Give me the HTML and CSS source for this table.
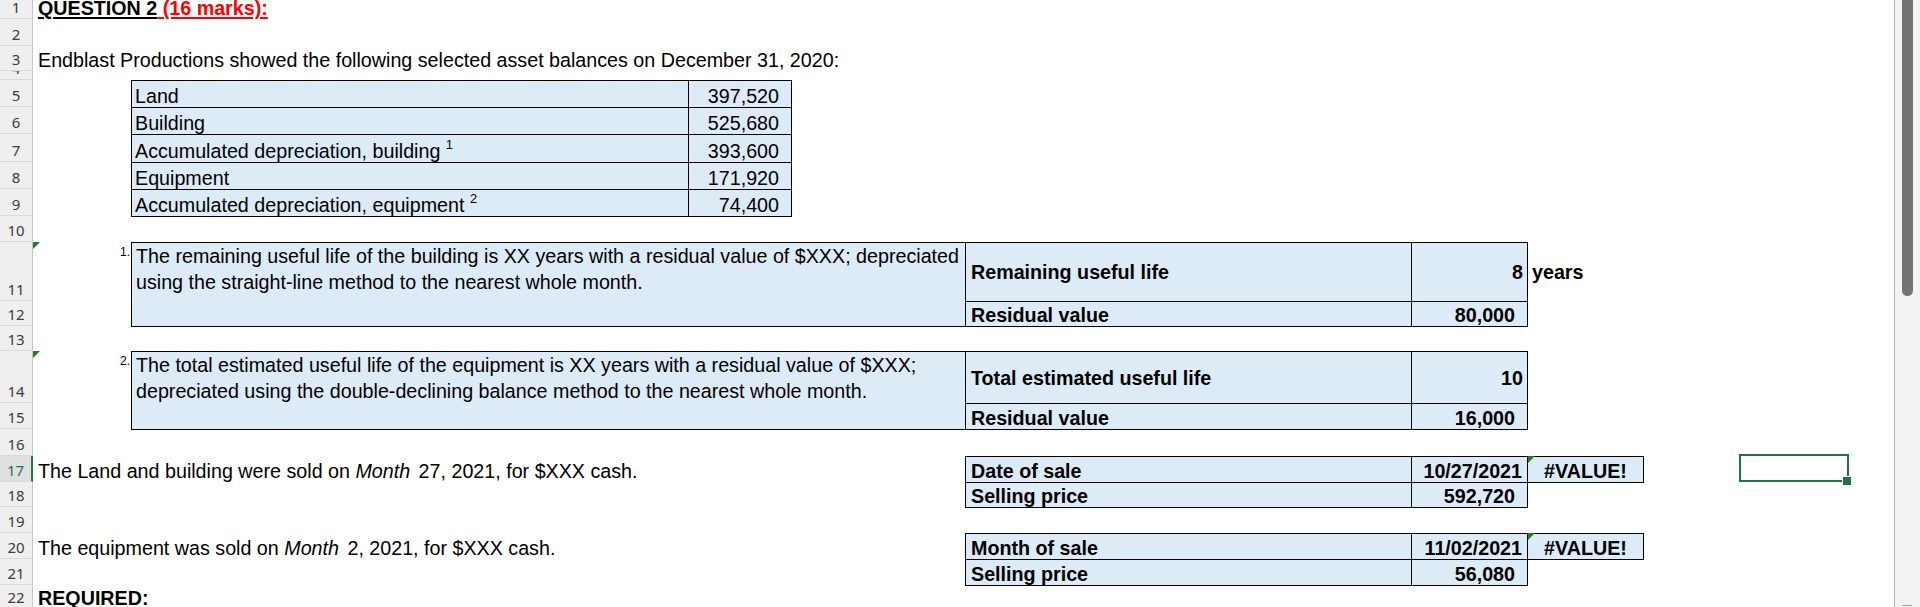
FILE: index.html
```html
<!DOCTYPE html>
<html lang="en">
<head>
<meta charset="utf-8">
<title>Question 2</title>
<link rel="stylesheet" href="styles.css">
</head>
<body>
<div class="app">
  <div class="sheet">
    <div class="rh">1</div>
    <div class="rh">2</div>
    <div class="rh">3</div>
    <div class="rh">4</div>
    <div class="rh">5</div>
    <div class="rh">6</div>
    <div class="rh">7</div>
    <div class="rh">8</div>
    <div class="rh">9</div>
    <div class="rh">10</div>
    <div class="rh">11</div>
    <div class="rh">12</div>
    <div class="rh">13</div>
    <div class="rh">14</div>
    <div class="rh">15</div>
    <div class="rh">16</div>
    <div class="rh on">17</div>
    <div class="rh">18</div>
    <div class="rh">19</div>
    <div class="rh">20</div>
    <div class="rh">21</div>
    <div class="rh">22</div>

    <div class="r1 wide b title"><span class="u-black">QUESTION 2</span><span class="u-red"> (16 marks):</span></div>
    <div class="cell r3 wide"><span>Endblast Productions showed the following selected asset balances on December 31, 2020:</span></div>

    <div class="cell bx r5 cb"><span>Land</span></div>
    <div class="cell bx num r5 cc"><span>397,520</span></div>
    <div class="cell bx r6 cb"><span>Building</span></div>
    <div class="cell bx num r6 cc"><span>525,680</span></div>
    <div class="cell bx r7 cb"><span>Accumulated depreciation, building <sup class="sup">1</sup></span></div>
    <div class="cell bx num r7 cc"><span>393,600</span></div>
    <div class="cell bx r8 cb"><span>Equipment</span></div>
    <div class="cell bx num r8 cc"><span>171,920</span></div>
    <div class="cell bx r9 cb"><span>Accumulated depreciation, equipment <sup class="sup">2</sup></span></div>
    <div class="cell bx num r9 cc"><span>74,400</span></div>

    <div class="tri r11 ca"></div>
    <div class="note r11 ca">1.</div>
    <div class="box bx rows11 span-bd">The remaining useful life of the building is XX years with a residual value of $XXX; depreciated<br>using the straight-line method to the nearest whole month.</div>
    <div class="cell bx b mid r11 ce"><span>Remaining useful life</span></div>
    <div class="cell bx b mid num tight r11 cf"><span>8</span></div>
    <div class="cell b mid unit r11 cg"><span>years</span></div>
    <div class="cell bx b r12 ce"><span>Residual value</span></div>
    <div class="cell bx b num r12 cf"><span>80,000</span></div>

    <div class="tri r14 ca"></div>
    <div class="note r14 ca">2.</div>
    <div class="box bx rows14 span-bd">The total estimated useful life of the equipment is XX years with a residual value of $XXX;<br>depreciated using the double-declining balance method to the nearest whole month.</div>
    <div class="cell bx b mid r14 ce"><span>Total estimated useful life</span></div>
    <div class="cell bx b mid num tight r14 cf"><span>10</span></div>
    <div class="cell bx b r15 ce"><span>Residual value</span></div>
    <div class="cell bx b num r15 cf"><span>16,000</span></div>

    <div class="cell r17 span-ad"><span>The Land and building were sold on <i class="it">Month</i> 27, 2021, for $XXX cash.</span></div>
    <div class="cell bx b r17 ce"><span>Date of sale</span></div>
    <div class="cell bx b num date r17 cf"><span>10/27/2021</span></div>
    <div class="cell bx b center r17 cg"><span>#VALUE!</span></div>
    <div class="tri tri-in r17 cg"></div>
    <div class="sel r17 ci"></div>
    <div class="cell bx b r18 ce"><span>Selling price</span></div>
    <div class="cell bx b num r18 cf"><span>592,720</span></div>

    <div class="cell r20 span-ad"><span>The equipment was sold on <i class="it">Month</i> 2, 2021, for $XXX cash.</span></div>
    <div class="cell bx b r20 ce"><span>Month of sale</span></div>
    <div class="cell bx b num date r20 cf"><span>11/02/2021</span></div>
    <div class="cell bx b center r20 cg"><span>#VALUE!</span></div>
    <div class="tri tri-in r20 cg"></div>
    <div class="cell bx b r21 ce"><span>Selling price</span></div>
    <div class="cell bx b num r21 cf"><span>56,080</span></div>

    <div class="cell r22 span-ad b"><span>REQUIRED:</span></div>
  </div>
  <div class="vscroll">
    <div class="thumb"></div>
    <div class="arrow"></div>
  </div>
</div>
</body>
</html>
```
FILE: styles.css
```css
* { box-sizing: border-box; }
html, body { margin: 0; padding: 0; }
body {
  background: #fff;
  overflow: hidden;
  font-family: "Liberation Sans", Arial, sans-serif;
  font-size: 19.7px;
  color: #000;
}
.app {
  display: flex;
  width: 1920px;
  height: 607px;
  overflow: hidden;
}
.sheet {
  flex: none;
  width: 1894px;
  height: 607px;
  overflow: hidden;
  display: grid;
  grid-template-columns: 33px 98px 557px 103px 174px 446px 116px 116px 96px 110px 45px;
  grid-template-rows: 19px 27px 25px 9px 27px 27px 28px 27px 27px 26px 59px 25px 25px 52px 26px 27px 26px 25px 26px 26px 26px 24px;
  align-content: start;
}

/* row headers */
.rh {
  grid-column: 1;
  background: #efefef;
  border-right: 1px solid #c6c6c6;
  border-bottom: 1px solid #dadada;
  display: flex;
  align-items: flex-end;
  justify-content: center;
  overflow: hidden;
  font-family: "Noto Sans", "Open Sans", sans-serif;
  font-size: 15px;
  line-height: 19px;
  padding-bottom: 1px;
  color: #3c3c3c;
}
.rh.on {
  background: #e0e0e0;
  color: #217346;
  border-right: 2px solid #217346;
}

/* grid placement */
.r1 { grid-row: 1; }
.r3 { grid-row: 3; }
.r5 { grid-row: 5; }
.r6 { grid-row: 6; }
.r7 { grid-row: 7; }
.r8 { grid-row: 8; }
.r9 { grid-row: 9; }
.r11 { grid-row: 11; }
.r12 { grid-row: 12; }
.r14 { grid-row: 14; }
.r15 { grid-row: 15; }
.r17 { grid-row: 17; }
.r18 { grid-row: 18; }
.r20 { grid-row: 20; }
.r21 { grid-row: 21; }
.r22 { grid-row: 22; }
.rows11 { grid-row: 11 / 13; }
.rows14 { grid-row: 14 / 16; }
.ca { grid-column: 2; }
.cb { grid-column: 3; }
.cc { grid-column: 4; }
.ce { grid-column: 6; }
.cf { grid-column: 7; }
.cg { grid-column: 8; }
.ci { grid-column: 10; }
.wide { grid-column: 2 / 12; }
.span-ad { grid-column: 2 / 6; }
.span-bd { grid-column: 3 / 6; }

/* cells */
.cell {
  display: flex;
  align-items: flex-end;
  white-space: nowrap;
  line-height: 22px;
  padding-left: 5px;
  min-width: 0;
}
.bx {
  background: #ddebf7;
  border: 1px solid #000;
  margin: 0 -1px -1px 0;
  padding-left: 3px;
}
.ce.bx { padding-left: 5px; }
.num { justify-content: flex-end; padding-right: 12px; }
.num.tight { padding-right: 4px; }
.num.date { padding-right: 5px; }
.center { justify-content: center; padding-left: 0; }
.mid { align-items: center; }
.b { font-weight: bold; }
.unit { padding-left: 5px; }
.it { padding-right: 3px; }
.sup { font-size: 13px; vertical-align: 9px; line-height: 0; }

.title {
  display: block;
  white-space: nowrap;
  line-height: 17px;
  padding-left: 5px;
}
.title .u-black {
  text-decoration: underline;
  text-decoration-thickness: 2px;
  text-underline-offset: 2px;
}
.title .u-red {
  color: #ff0000;
  text-decoration: underline;
  text-decoration-color: #ff0000;
  text-decoration-thickness: 2px;
  text-underline-offset: 2px;
}

/* wrapped explanation boxes */
.box {
  display: block;
  white-space: nowrap;
  line-height: 26px;
  padding: 0 4px;
}

/* footnote markers */
.note {
  justify-self: end;
  align-self: start;
  font-size: 12px;
  line-height: 12px;
  padding-top: 4px;
  padding-right: 1px;
  color: #000;
}

/* green error indicators */
.tri {
  justify-self: start;
  align-self: start;
  width: 0;
  height: 0;
  border-top: 7px solid #1e7e22;
  border-right: 7px solid transparent;
}
.tri-in { margin: 0 0 0 1px; }

/* selected cell */
.sel {
  position: relative;
  border: 2px solid #217346;
  margin: -2px 0 0 0;
}
.sel::after {
  content: "";
  position: absolute;
  right: -5px;
  bottom: -6px;
  width: 8px;
  height: 8px;
  background: #217346;
  border: 1px solid #fff;
}

/* vertical scrollbar */
.vscroll {
  flex: none;
  width: 26px;
  height: 607px;
  background: #f3f3f3;
  border-left: 1px solid #b9b9b9;
  padding-left: 7px;
  display: flex;
  flex-direction: column;
  justify-content: space-between;
}
.thumb {
  width: 11px;
  height: 296px;
  background: #737373;
  border-radius: 0 0 6px 6px;
}
.arrow {
  width: 10px;
  height: 1px;
  background: #a0a0a0;
  margin-bottom: 1px;
}
```
